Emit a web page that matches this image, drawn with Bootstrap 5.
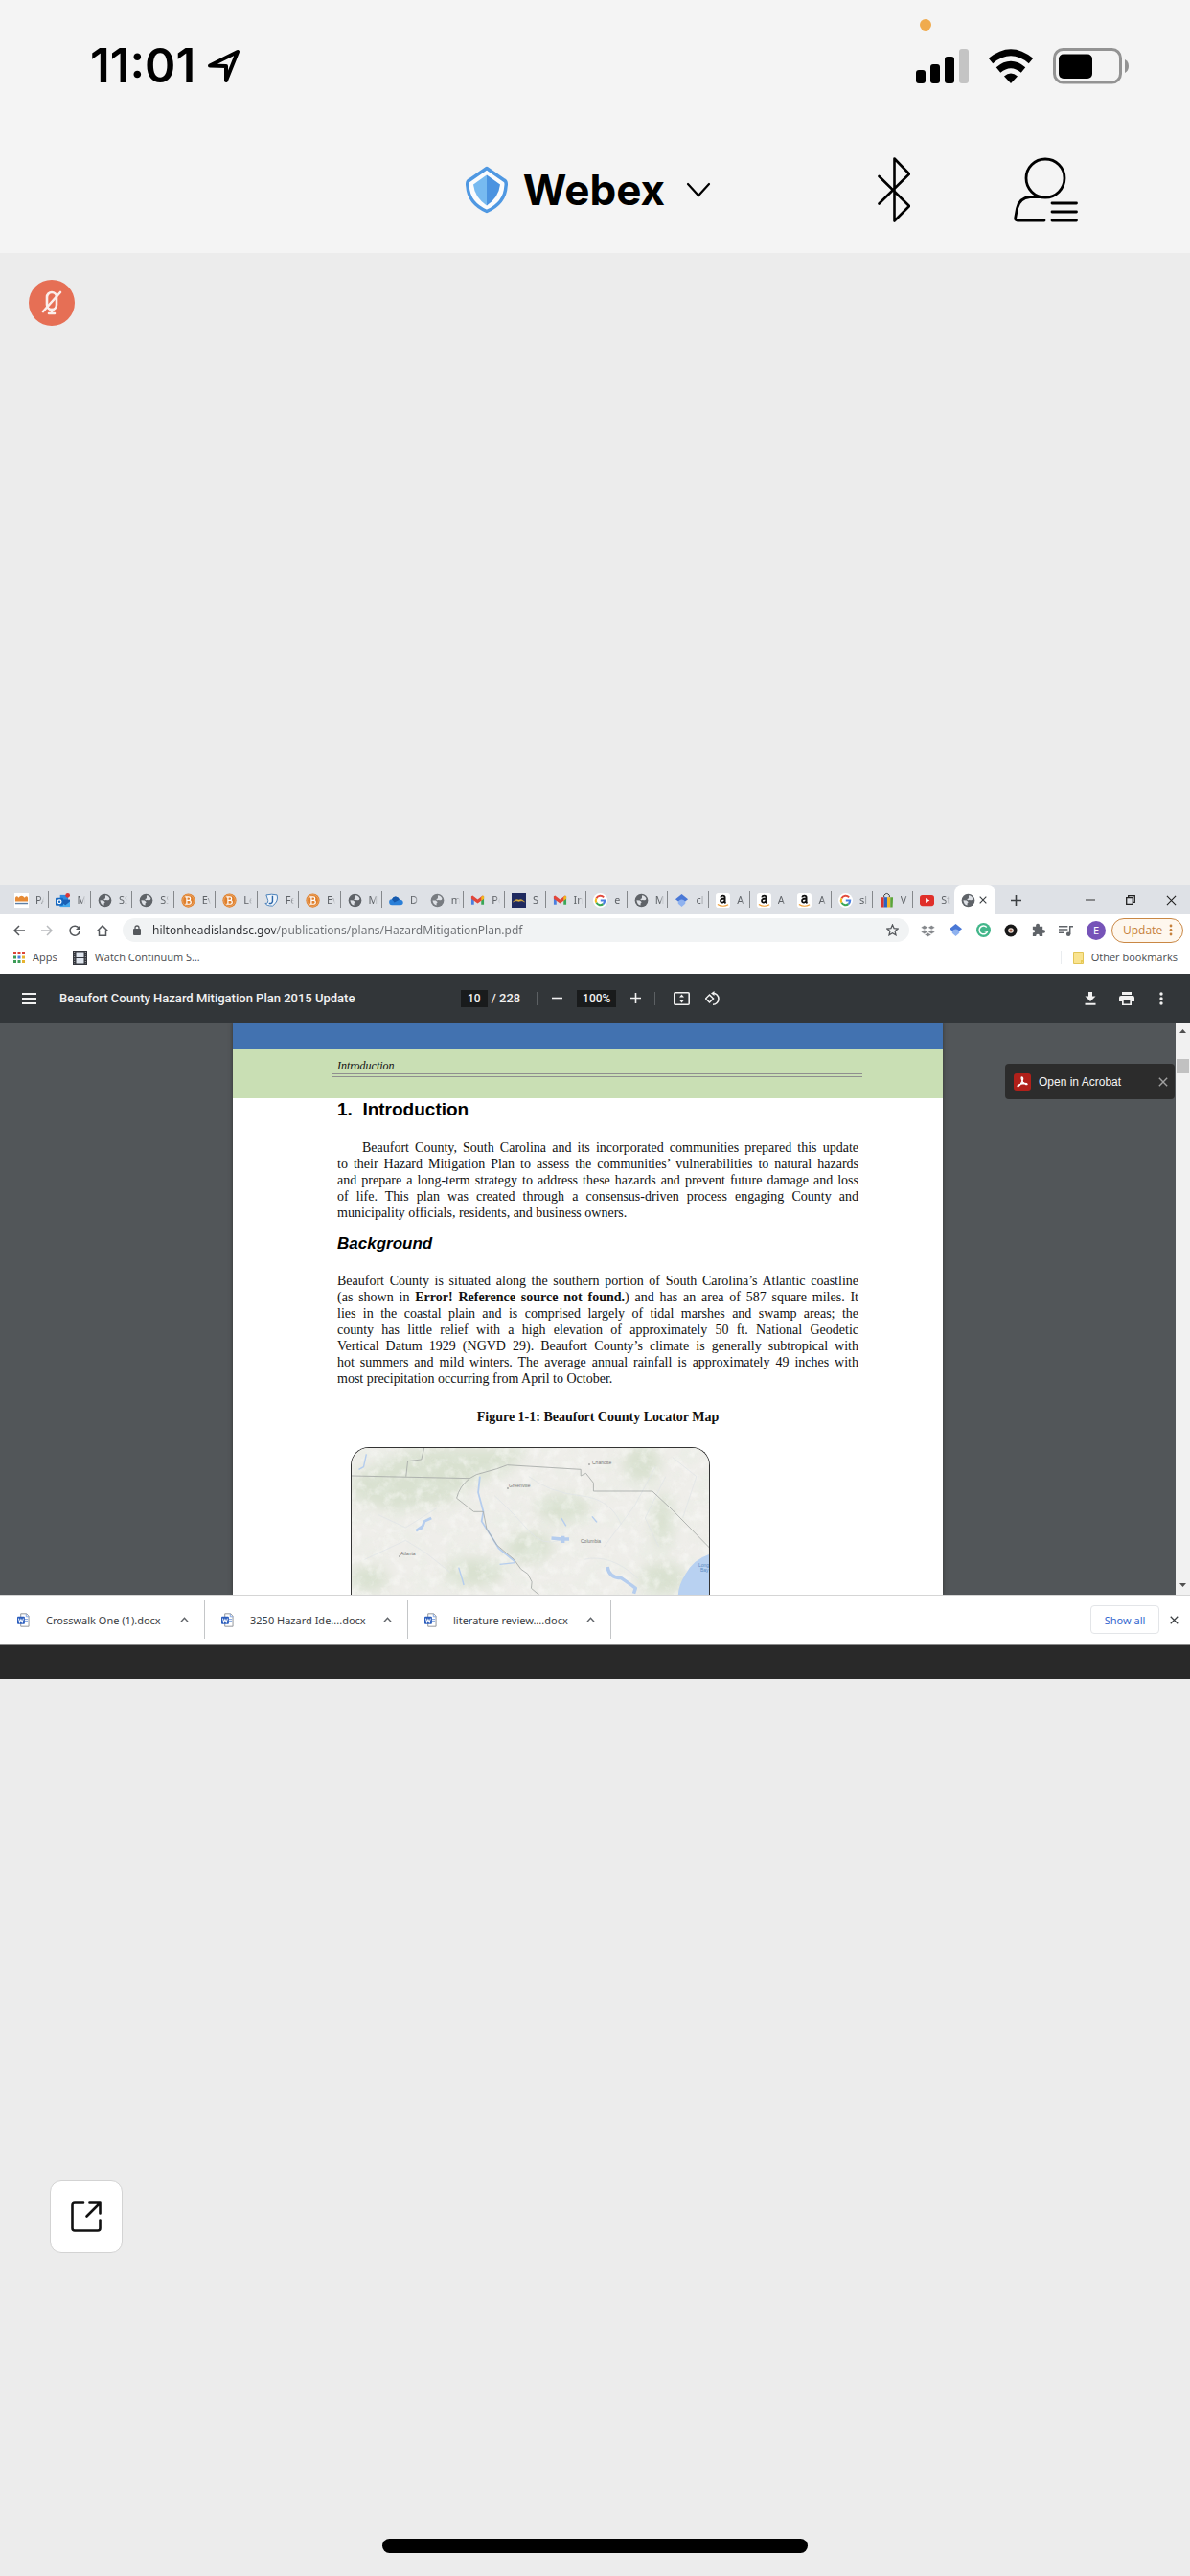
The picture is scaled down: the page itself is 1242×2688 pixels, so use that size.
<!DOCTYPE html>
<html lang="en">
<head>
<meta charset="utf-8">
<meta name="viewport" content="width=device-width, initial-scale=1">
<title>Webex</title>
<link rel="stylesheet" href="https://cdn.jsdelivr.net/npm/bootstrap@5.3.0/dist/css/bootstrap.min.css">
<style>
body{background:#ececec;color:#000;font-family:Inter,sans-serif}
svg{display:block;flex:none}
button{color:inherit;background:none;border:0;padding:0;line-height:1}
.call-head{background:#f4f4f4}
.status-row{height:134px;padding:3px 64px 0 94px}
.clock-set{gap:12px}
.clock{font-size:49px;font-weight:600;line-height:48px}
.status-icons{gap:20px}
.mic-dot{width:12px;height:12px;background:#f0ab4e;right:270px;top:20px}
.title-row{height:130px;display:grid;grid-template-columns:1fr auto 1fr;padding-bottom:2px}
.title-btn{font-size:44px;font-weight:700;line-height:48px;padding-right:14px}
.title-chev{margin-left:22px}
.head-icons{gap:108px;padding-right:117px}
.stage-top{height:660px;padding:28px 30px}
.mute-btn{width:48px;height:48px;background:#e66f55}
.win{font-family:"Noto Sans","Open Sans",sans-serif;font-size:12px;line-height:16px;color:#3c4043}
.tab-strip{height:30px;background:#dee1e6;padding-left:8px}
.tab-set{height:30px}
.tabs-a{width:391px}
.tabs-b{width:597px}
.tab-btn{flex:1 1 0;min-width:0;padding-left:7px;gap:7px;position:relative;font-size:11px;color:#5f6368;text-align:left}
.tab-btn::after{content:"";position:absolute;right:0;top:6px;height:18px;width:1px;background:#85888c}
.tab-txt{width:9px;line-height:16px;white-space:nowrap;-webkit-mask-image:linear-gradient(90deg,#000 50%,transparent);mask-image:linear-gradient(90deg,#000 50%,transparent)}
.tab-btn.no-rule::after{display:none}
.tab-btn.tab-on{flex:none;width:43px;background:#fff;border-radius:8px 8px 0 0;gap:4px;color:#3c4043}
.win-ctl{gap:28px;padding-right:14px}
.tool-row{height:33px;background:#fff;padding:0 7px 0 14px}
.nav-set{gap:17px;color:#5a5d61;padding-right:15px}
.omni{height:25px;background:#f1f3f4;border-radius:13px;padding:0 11px}
.url-box{border:0;outline:0;padding:0;font-size:12px;line-height:20px;height:22px;background:linear-gradient(90deg,#303236 132px,#6d7074 132px);-webkit-background-clip:text;background-clip:text;color:transparent}
.ext-set{gap:14px;padding-left:12px;padding-right:6px}
.avatar{width:20px;height:20px;background:#7654b8;color:#fff;font-size:11px}
.update-btn{height:26px;width:75px;border:1px solid #c98744;background:#fef7ee;color:#c5803c;border-radius:13px;padding:0 10px 0 11px;font-size:12px;font-family:"Open Sans",sans-serif}
.mark-row{height:29px;background:#fff;padding:0 13px 5px 14px;font-size:11px;font-family:"Open Sans",sans-serif}
.mark-row a{color:#4a4d51;text-decoration:none}
.mark-rule{height:14px;margin-right:12px}
.pdf-bar{height:51px;background:#323639;color:#f1f1f1;font-family:Roboto,sans-serif;font-size:13px;font-weight:500;display:grid;grid-template-columns:1fr auto 1fr;padding:0 26px 0 23px}
.pdf-bar .pdf-box{background:#191b1c;border:0;color:#f1f1f1;text-align:center;height:18px;padding:0;font-size:12px;font-weight:500}
.pdf-title{margin-left:24px}
.pdf-mid{padding-right:6px}
.page-in{width:28px}
.zoom-in{width:41px;margin:0 15px}
.bar-rule{width:1px;height:14px;background:#5c6063}
.rule-a{margin:0 15px 0 17px}
.rule-b{margin:0 19px 0 14px}
.pdf-end{gap:24px}
.pdf-view{height:597px;background:#525659;overflow:hidden}
.sheet{width:741px;background:#fff;font-family:"Liberation Serif",serif;color:#111;box-shadow:0 0 4px #333}
.band-blue{height:28px;background:#4272b0}
.band-green{height:51px;background:#c9dfb4;padding:9px 84px 0 103px}
.run-head{font-size:12px;line-height:16px;font-style:italic;padding-left:6px;border-bottom:4px double #8f8f8f}
.sheet-body{padding:0 88px 0 109px}
.sheet h1,.sheet h2{font-family:"Liberation Sans",sans-serif;font-weight:700;margin:0}
.sheet h1{font-size:19px;line-height:24px;padding-bottom:19px;color:#000}
.sheet h2{font-size:17px;line-height:24px;font-style:italic;padding:12px 0 18px;color:#000}
.sheet p{font-size:14px;line-height:17px;margin:0}
.sheet p span{display:block;white-space:nowrap;text-align:justify;text-align-last:justify}
.sheet p span:last-child{text-align-last:left}
.sheet p span.indent{padding-left:26px}
.sheet figcaption{font-size:14px;line-height:18px;font-weight:700;text-align:center;padding:23px 0 22px}
.map-box{width:375px;margin-left:14px;border:1px solid #333;border-bottom:0;border-radius:19px 19px 0 0;overflow:hidden}
.scroll-col{width:15px;background:#f1f1f1;color:#505050;padding:7px 0 8px}
.scroll-thumb{height:15px;background:#c1c1c1;margin:27px 1px 0}
.acro{right:1px;top:43px;width:177px;height:37px;background:#2c2c2c;border-radius:4px;color:#f4f4f4;font-family:"Liberation Sans",sans-serif;font-size:12px;padding:0 7px 0 9px}
.acro-x{color:#a0a0a0}
.dl-row{height:51px;background:#fff;border-top:1px solid #d5d5d5;font-size:11px}
.dl-item{width:212px;height:40px;padding:0 16px 0 17px;border-right:1px solid #c4c6c8}
.dl-item:first-child{width:214px;padding-left:18px}
.dl-name{flex:1;padding-left:17px;text-align:left}
.show-all{width:72px;height:30px;border:1px solid #e3e5e8;border-radius:4px;color:#3569cf;font-size:11px}
.dl-x{margin:0 12px 0 11px}
.dock-strip{height:37px;background:#292929;border-top:1px solid #8b8b8b}
.pop-btn{width:76px;height:76px;border:1px solid #d3d3d3;border-radius:12px;margin:0 52px 298px;background:#fff;color:#111}
.home-bar{width:444px;height:15px;background:#000;margin-bottom:24px}
</style>
</head>
<body>
<svg width="0" height="0" class="position-absolute" aria-hidden="true">
<defs>
<symbol id="globe" viewBox="0 0 16 16"><circle cx="8" cy="8" r="7.300" fill="#5f6368"/><path d="M8.500 2.500q3.500.2 4.800 3.500-.8 2.200-2.800 1.600-1.200-.6-2.500.2-1.500-.2-1-1.500l1.500-.8z M2.600 7.600l3.600.3 2 2-1.200 1.400v2q-3.900-.7-4.400-5.700z" fill="#dee1e6"/></symbol>
<symbol id="bee" viewBox="0 0 16 16"><circle cx="8" cy="8" r="7.600" fill="#df7f2c"/><circle cx="8" cy="8" r="6.200" fill="none" stroke="#f3c08c" stroke-width=".6"/><path d="M4.500 4.200h4a1.800 1.800 0 0 1 0 3.700H6.300h2.600a2 2 0 0 1 0 4.100H4.500M6.300 4v8" fill="none" stroke="#fff" stroke-width="1.300"/></symbol>
<symbol id="gmail" viewBox="0 0 16 16"><path d="M1 3.500v9h3V6z" fill="#4a7fe0"/><path d="M15 3.500v9h-3V6z" fill="#3ba757"/><path d="M1 3.500 2.500 2.600 8 7l5.500-4.400L15 3.500v2.500l-7 5.200L1 6z" fill="#e1463a"/><path d="M12 4.200 14 2.600l1 1V6l-3 2.200z" fill="#f2b91d"/></symbol>
<symbol id="goog" viewBox="0 0 16 16"><circle cx="8" cy="8" r="8" fill="#fff"/><g fill="none" stroke-width="2.200"><path d="M11.900 4.600A5 5 0 0 0 3.700 5.500" stroke="#e24a3d"/><path d="M3.700 5.500a5 5 0 0 0 0 5" stroke="#f3b922"/><path d="M3.700 10.500a5 5 0 0 0 7.500 1.400" stroke="#3ba757"/><path d="M11.200 11.900A5 5 0 0 0 13 8H8.300" stroke="#4a7fe0"/></g></symbol>
<symbol id="amzn" viewBox="0 0 16 16"><rect width="16" height="16" rx="3" fill="#fff"/><path d="M5.600 4.600C6 2.200 10.200 2.100 10.200 4.800V10l1 1M10 5.900C6.500 6 5 7 5.400 8.900 5.900 10.900 9.200 10.600 10 8.200" fill="none" stroke="#111" stroke-width="2"/><path d="M2 12.200q6 3.700 12 .3" fill="none" stroke="#f0a13b" stroke-width="1.300"/></symbol>
<symbol id="scholar" viewBox="0 0 16 16"><path d="M8 1 15 6.600 8 12 1 6.600z" fill="#4a78d6"/><path d="M4 9q4-4 8 0v2.500L8 15l-4-3.500z" fill="#8fb2ef"/></symbol>
<symbol id="worddoc" viewBox="0 0 14 16"><path d="M4 .8h6.500L13 3.500v11.700H4z" fill="#fff" stroke="#8b9096"/><path d="M10 1v3h3M8.500 7H12M8.500 9H12" fill="none" stroke="#7ca0dc"/><rect y="4" width="8.500" height="8.500" rx="1" fill="#2b5dbd"/><path d="m1.600 6 1.200 4.500L4.200 7l1.400 3.500L6.900 6" fill="none" stroke="#fff" stroke-width="1.100"/></symbol>
<symbol id="xmark" viewBox="0 0 12 12"><path d="m1 1 10 10M11 1 1 11" fill="none" stroke="currentColor" stroke-width="1.700"/></symbol>
<symbol id="caret" viewBox="0 0 10 8"><path d="m1 6.500 4-4.500 4 4.500" fill="none" stroke="#5f6368" stroke-width="1.500"/></symbol>
</defs>
</svg>

<div class="d-flex flex-column min-vh-100">
<header class="call-head">
  <div class="status-row d-flex align-items-center justify-content-between position-relative">
    <div class="clock-set d-flex align-items-center">
      <span class="clock">11:01</span>
      <svg width="36" height="36" viewBox="0 0 36 36"><path d="M3 17.500 32 3 20 33v-15z" fill="none" stroke="#000" stroke-width="4" stroke-linejoin="round"/></svg>
    </div>
    <span class="mic-dot position-absolute rounded-circle"></span>
    <div class="status-icons d-flex align-items-center">
      <svg width="55" height="36" viewBox="0 0 55 36"><rect y="22" width="10" height="14" rx="3"/><rect x="15" y="16" width="10" height="20" rx="3"/><rect x="30" y="8" width="10" height="28" rx="3"/><rect x="45" width="10" height="36" rx="3" fill="#c4c4c4"/></svg>
      <svg width="48" height="36" viewBox="0 0 48 36"><g fill="none" stroke="#000" stroke-width="7"><path d="M3 12.500Q24-5 45 12.500"/><path d="M11 22q13-11 26 0"/></g><path d="M24 36l-7-7.500q7-6 14 0z"/></svg>
      <svg width="79" height="38" viewBox="0 0 79 38"><rect x="1.500" y="1.500" width="69" height="34.500" rx="9" fill="none" stroke="#939393" stroke-width="3"/><rect x="6" y="6.500" width="35" height="25.500" rx="5"/><path d="M75 12q4 2 4 7t-4 7z" fill="#939393"/></svg>
    </div>
  </div>
  <div class="title-row align-items-center">
    <span></span>
    <button type="button" class="title-btn d-flex align-items-center">
      <svg class="me-3" width="44" height="50" viewBox="0 0 44 50"><path d="M22 2.500 40 15q3 1 2 6.500Q41 39 22 47.500 3 39 2 21.500 1 16 4 15z" fill="#fbfcfd" stroke="#4f98e2" stroke-width="3.500" stroke-linejoin="round"/><path d="M22 9.500v32Q9.500 33 8 19.500z" fill="#77baf0"/><path d="M22 9.500v32Q34.500 33 36 19.500z" fill="#4b93e0"/></svg>
      <span>Webex</span>
      <svg class="title-chev" width="26" height="16" viewBox="0 0 26 16"><path d="m2 2 11 12L24 2" fill="none" stroke="#000" stroke-width="2.200" stroke-linecap="round"/></svg>
    </button>
    <div class="head-icons d-flex justify-content-end">
      <button type="button" aria-label="Bluetooth audio"><svg width="34" height="68" viewBox="0 0 34 68"><path d="M1.500 20 33 51 17.500 66.500v-65L33 17.500 1.500 48.500" fill="none" stroke="#000" stroke-width="2.600" stroke-linejoin="round" stroke-linecap="round"/></svg></button>
      <button type="button" aria-label="Participants"><svg width="67" height="68" viewBox="0 0 67 68"><g fill="none" stroke="#000" stroke-width="2.800" stroke-linecap="round"><circle cx="33" cy="22" r="20"/><path d="M32 66H4q-2.500 0-2.300-2.500l1.800-10Q6 42.500 17 41.500h15M40 48h25.500M40 57h25.500M40 66h25.500"/></g></svg></button>
    </div>
  </div>
</header>

<main class="flex-grow-1 d-flex flex-column">
  <div class="stage-top">
    <button type="button" class="mute-btn rounded-circle d-flex align-items-center justify-content-center" aria-label="Muted">
      <svg width="22" height="26" viewBox="0 0 22 26"><g fill="none" stroke="#fbeeeb" stroke-width="2.600" stroke-linecap="round"><rect x="6" y="2" width="10" height="18" rx="5"/><path d="M20 2 2 22M11 20v4M8 24h6"/></g></svg>
    </button>
  </div>

  <section class="win">
    <div class="tab-strip d-flex">
      <div class="tab-set tabs-a d-flex">
        <button type="button" class="tab-btn d-flex align-items-center"><svg width="15" height="15" viewBox="0 0 16 16"><path fill="#fff" d="M0 0h16v16H0z"/><path d="M1 9V5q2-3 3.500 0Q8 1 11.500 5q2-3 3.500 0v4z" fill="#e68a35"/><path d="M1 10.500h14V12H1z" fill="#5c7fa5"/></svg><span class="tab-txt">PA</span></button>
        <button type="button" class="tab-btn d-flex align-items-center"><svg width="15" height="15" viewBox="0 0 16 16"><path fill="#2f8be0" d="M5 2h9v6H5z"/><path fill="#1a5fb4" d="M5 7h11v8H5z"/><path d="m5 9 6 4 5-4v6H5z" fill="#45a9ee"/><rect y="5" width="8.500" height="8.500" rx="1" fill="#1668c1"/><circle cx="4.300" cy="9.300" r="2" fill="none" stroke="#fff" stroke-width="1.300"/><circle cx="13.500" cy="2.500" r="2.500" fill="#d93636"/></svg><span class="tab-txt">M</span></button>
        <button type="button" class="tab-btn d-flex align-items-center"><svg width="15" height="15"><use href="#globe"/></svg><span class="tab-txt">SS</span></button>
        <button type="button" class="tab-btn d-flex align-items-center"><svg width="15" height="15"><use href="#globe"/></svg><span class="tab-txt">SS</span></button>
        <button type="button" class="tab-btn d-flex align-items-center"><svg width="15" height="15"><use href="#bee"/></svg><span class="tab-txt">Ev</span></button>
        <button type="button" class="tab-btn d-flex align-items-center"><svg width="15" height="15"><use href="#bee"/></svg><span class="tab-txt">Le</span></button>
        <button type="button" class="tab-btn d-flex align-items-center"><svg width="15" height="15" viewBox="0 0 16 16"><path d="M2 2q6-1.500 12 0 2 7-5 12Q2 14 1 11q3 1 3-3z" fill="#eef4fb" stroke="#447db8"/><path d="M9 3v6q-1 3-4 2" fill="none" stroke="#2b66a8" stroke-width="1.500"/></svg><span class="tab-txt">Fe</span></button>
        <button type="button" class="tab-btn d-flex align-items-center"><svg width="15" height="15"><use href="#bee"/></svg><span class="tab-txt">Ev</span></button>
        <button type="button" class="tab-btn d-flex align-items-center"><svg width="15" height="15"><use href="#globe"/></svg><span class="tab-txt">M</span></button>
      </div>
      <div class="tab-set tabs-b d-flex">
        <button type="button" class="tab-btn d-flex align-items-center"><svg width="15" height="15" viewBox="0 0 16 16"><path d="M3.500 13a3.200 3.200 0 0 1-.3-6.400Q5 3 8.300 4q2.700.5 3.400 3.200 4 .2 4 3.200 0 2.600-3 2.600z" fill="#2a7fd8"/><path d="M3.200 6.600Q5 3 8.300 4q2.700.5 3.400 3.200L6 10z" fill="#1559ac"/></svg><span class="tab-txt">D</span></button>
        <button type="button" class="tab-btn d-flex align-items-center"><svg width="15" height="15" opacity=".8"><use href="#globe"/></svg><span class="tab-txt">m</span></button>
        <button type="button" class="tab-btn d-flex align-items-center"><svg width="15" height="15"><use href="#gmail"/></svg><span class="tab-txt">Pe</span></button>
        <button type="button" class="tab-btn d-flex align-items-center"><svg width="15" height="15" viewBox="0 0 16 16"><path fill="#1f2a60" d="M0 0h16v16H0z"/><path d="M1.500 9.500Q5 5.500 8 7.500q3-2 6.500 2Q11 7.500 8 9 5 7.500 1.500 9.500z" fill="#e3b43c" stroke="#e3b43c" stroke-width=".5"/></svg><span class="tab-txt">S</span></button>
        <button type="button" class="tab-btn d-flex align-items-center"><svg width="15" height="15"><use href="#gmail"/></svg><span class="tab-txt">In</span></button>
        <button type="button" class="tab-btn d-flex align-items-center"><svg width="15" height="15"><use href="#goog"/></svg><span class="tab-txt">e</span></button>
        <button type="button" class="tab-btn d-flex align-items-center"><svg width="15" height="15"><use href="#globe"/></svg><span class="tab-txt">M</span></button>
        <button type="button" class="tab-btn d-flex align-items-center"><svg width="15" height="15"><use href="#scholar"/></svg><span class="tab-txt">cl</span></button>
        <button type="button" class="tab-btn d-flex align-items-center"><svg width="15" height="15"><use href="#amzn"/></svg><span class="tab-txt">A</span></button>
        <button type="button" class="tab-btn d-flex align-items-center"><svg width="15" height="15"><use href="#amzn"/></svg><span class="tab-txt">A</span></button>
        <button type="button" class="tab-btn d-flex align-items-center"><svg width="15" height="15"><use href="#amzn"/></svg><span class="tab-txt">A</span></button>
        <button type="button" class="tab-btn d-flex align-items-center"><svg width="15" height="15"><use href="#goog"/></svg><span class="tab-txt">sl</span></button>
        <button type="button" class="tab-btn d-flex align-items-center"><svg width="15" height="16" viewBox="0 0 16 16"><path d="M5 5V3q3-4 6 0v2" fill="none" stroke="#333"/><path d="M1 5h4v11H2z" fill="#d8372f"/><path d="M5 5h3.500v11H5z" fill="#2c64c0"/><path d="M8.500 5H12v11H8.500z" fill="#efb72b"/><path d="M12 5h3l-.5 11H12z" fill="#5ba53a"/></svg><span class="tab-txt">V</span></button>
        <button type="button" class="tab-btn no-rule d-flex align-items-center"><svg width="15" height="15" viewBox="0 0 16 16"><rect y="2" width="16" height="12" rx="3" fill="#e02f2a"/><path d="M6.500 5.300v5.400L11 8z" fill="#fff"/></svg><span class="tab-txt">St</span></button>
      </div>
      <div class="d-flex flex-grow-1 align-items-center justify-content-between">
        <div class="d-flex align-items-center h-100">
          <button type="button" class="tab-btn tab-on no-rule d-flex align-items-center h-100" aria-label="Active tab"><svg width="15" height="15"><use href="#globe"/></svg><svg width="8" height="8"><use href="#xmark"/></svg></button>
          <button type="button" aria-label="New tab" class="ms-3"><svg width="11" height="11" viewBox="0 0 11 11"><path d="M5.500 0v11M0 5.500h11" stroke="#3c4043" stroke-width="1.600"/></svg></button>
        </div>
        <div class="win-ctl d-flex align-items-center">
          <button type="button" aria-label="Minimize" class="me-1"><svg width="10" height="10" viewBox="0 0 10 10"><path d="M0 5h10" stroke="#333"/></svg></button>
          <button type="button" aria-label="Restore" class="me-1"><svg width="10" height="10" viewBox="0 0 10 10"><path d="M.7 2.700h6.600v6.600H.7zM2.700 2.700v-2h6.600v6.600h-2" fill="none" stroke="#222" stroke-width="1.300"/></svg></button>
          <button type="button" aria-label="Close window"><svg width="11" height="11" viewBox="0 0 12 12"><path d="m1 1 10 10M11 1 1 11" stroke="#222" stroke-width="1.200"/></svg></button>
        </div>
      </div>
    </div>

    <div class="tool-row d-flex align-items-center">
      <div class="nav-set d-flex align-items-center">
        <button type="button" aria-label="Back"><svg width="12" height="12" viewBox="0 0 12 12"><path d="M12 6H1M6 1 1 6l5 5" fill="none" stroke="#55585c" stroke-width="1.500"/></svg></button>
        <button type="button" aria-label="Forward"><svg width="12" height="12" viewBox="0 0 12 12"><path d="M0 6h11M6 1l5 5-5 5" fill="none" stroke="#b9bbbe" stroke-width="1.500"/></svg></button>
        <button type="button" aria-label="Reload"><svg width="12" height="12" viewBox="0 0 12 12"><path d="M10.300 3.500A5 5 0 1 0 11 7" fill="none" stroke="#55585c" stroke-width="1.500"/><path d="M12 0v5H7z" fill="#55585c"/></svg></button>
        <button type="button" aria-label="Home"><svg width="12" height="12" viewBox="0 0 12 12"><path d="M.5 6.500 6 1l5.500 5.500M2.500 5.500v5.800h7V5.500" fill="none" stroke="#55585c" stroke-width="1.500"/></svg></button>
      </div>
      <form class="omni d-flex align-items-center flex-grow-1">
        <svg width="8" height="11" viewBox="0 0 8 11"><rect y="4" width="8" height="7" rx="1" fill="#55585c"/><path d="M2 4.500V3q0-2 2-2t2 2v1.500" fill="none" stroke="#55585c" stroke-width="1.300"/></svg>
        <input class="url-box flex-grow-1 ms-2 me-2 ps-1" type="text" aria-label="Address" value="hiltonheadislandsc.gov/publications/plans/HazardMitigationPlan.pdf">
        <button type="button" aria-label="Bookmark this page"><svg width="13" height="13" viewBox="0 0 13 13"><path d="m6.500 1 1.600 3.700 4 .4-3 2.700.9 4-3.500-2.100L3 11.800l.9-4-3-2.700 4-.4z" fill="none" stroke="#55585c" stroke-width="1.300"/></svg></button>
      </form>
      <div class="ext-set d-flex align-items-center">
        <button type="button" aria-label="Dropbox"><svg width="15" height="14" viewBox="0 0 16 14"><path d="m4 1 4 2.500L4 6 0 3.500zM12 1l4 2.500L12 6 8 3.500zM4 6l4 2.500L4 11 0 8.500zM12 6l4 2.500-4 2.500-4-2.500zM8 9.500l4 2.300L8 14l-4-2.200z" fill="#85888c" stroke="#fff" stroke-width=".6"/></svg></button>
        <button type="button" aria-label="Scholar"><svg width="15" height="15"><use href="#scholar"/></svg></button>
        <button type="button" aria-label="Grammar check"><svg width="15" height="15" viewBox="0 0 16 16"><circle cx="8" cy="8" r="8" fill="#42b68a"/><path d="M11.500 4.800A4.700 4.700 0 1 0 12.500 9.200H9.200" fill="none" stroke="#fff" stroke-width="1.600"/></svg></button>
        <button type="button" aria-label="Recorder"><svg width="14" height="14" viewBox="0 0 14 14"><circle cx="7" cy="7" r="6.500" fill="#181818"/><circle cx="7" cy="7" r="2.800" fill="#efe2dc"/><circle cx="7" cy="7" r="1.600" fill="#a2634c"/></svg></button>
        <button type="button" aria-label="Extensions"><svg width="15" height="15" viewBox="0 0 16 16"><path d="M2 4h3.500Q5 .8 7.500.8T9.500 4H13v3.500q3 0 3 2t-3 2V15H9.500q0-2.500-2-2.500t-2 2.500H2v-3.800q2.500-.2 2.500-1.900T2 7.400z" fill="#5f6368"/></svg></button>
        <button type="button" aria-label="Media"><svg width="15" height="14" viewBox="0 0 16 14"><path d="M0 2.500h10M0 6h10M0 9.500h6M12.500 11V2.500H16" stroke="#5f6368" stroke-width="1.600" fill="none"/><circle cx="10.800" cy="11" r="2.400" fill="#5f6368"/></svg></button>
        <button type="button" class="avatar rounded-circle" aria-label="Profile">E</button>
      </div>
      <button type="button" class="update-btn d-flex align-items-center justify-content-between"><span>Update</span><svg width="4" height="13" viewBox="0 0 4 13"><g fill="#c5803c"><circle cx="2" cy="2" r="1.400"/><circle cx="2" cy="6.500" r="1.400"/><circle cx="2" cy="11" r="1.400"/></g></svg></button>
    </div>

    <div class="mark-row d-flex align-items-center">
      <svg width="12" height="12" viewBox="0 0 12 12"><path fill="#dc4437" d="M0 0h3v3H0zM4.500 0h3v3h-3zM9 0h3v3H9z"/><path fill="#3c9c57" d="M0 4.500h3v3H0zM0 9h3v3H0z"/><path fill="#4a7fe0" d="M4.500 4.500h3v3h-3z"/><path fill="#e7b22f" d="M9 4.500h3v3H9zM9 9h3v3H9z"/><path fill="#3c9c57" d="M4.500 9h3v3h-3z"/></svg>
      <a href="#" class="ms-2">Apps</a>
      <svg class="ms-3" width="15" height="15" viewBox="0 0 15 15"><path fill="#33363d" d="M0 0h15v15H0z"/><path fill="#dfe5ee" d="M3.500 1.500h8v5.500h-8zM3.500 8h8v5.500h-8z"/><path d="M1.700 1v13M13.300 1v13" stroke="#aaa" stroke-dasharray="1 1.500"/></svg>
      <a href="#" class="ms-2">Watch Continuum S...</a>
      <span class="mark-rule ms-auto border-start border-secondary-subtle"></span>
      <svg width="11" height="13" viewBox="0 0 11 13"><path d="M.5.500h10v12H.5z" fill="#f9e38f" stroke="#e2c557"/><path d="M8 13V9h3" fill="#e9cb55"/></svg>
      <a href="#" class="ms-2">Other bookmarks</a>
    </div>

    <div class="pdf-bar align-items-center">
      <div class="d-flex align-items-center">
        <button type="button" aria-label="Menu"><svg width="15" height="12" viewBox="0 0 15 12"><path d="M0 1h15M0 6h15M0 11h15" stroke="#f1f1f1" stroke-width="2"/></svg></button>
        <span class="pdf-title text-nowrap">Beaufort County Hazard Mitigation Plan 2015 Update</span>
      </div>
      <div class="pdf-mid d-flex align-items-center">
        <input class="pdf-box page-in" type="text" value="10" aria-label="Page"><span class="ms-1">/ 228</span>
        <span class="bar-rule rule-a"></span>
        <button type="button" aria-label="Zoom out"><svg width="11" height="11" viewBox="0 0 11 11"><path d="M0 5.500h11" stroke="#f1f1f1" stroke-width="1.600"/></svg></button>
        <input class="pdf-box zoom-in" type="text" value="100%" aria-label="Zoom">
        <button type="button" aria-label="Zoom in"><svg width="11" height="11" viewBox="0 0 11 11"><path d="M0 5.500h11M5.500 0v11" stroke="#f1f1f1" stroke-width="1.600"/></svg></button>
        <span class="bar-rule rule-b"></span>
        <button type="button" aria-label="Fit to page"><svg width="17" height="14" viewBox="0 0 17 14"><rect x=".8" y=".8" width="15.400" height="12.400" rx="1" fill="none" stroke="#f1f1f1" stroke-width="1.600"/><path d="M8.500 2.500 11 5.500H6zM8.500 11.500 11 8.500H6z" fill="#f1f1f1"/></svg></button>
        <button type="button" aria-label="Rotate" class="ms-3"><svg width="16" height="16" viewBox="0 0 16 16"><path d="m4.500 4 4 4-4 4-4-4z" fill="none" stroke="#f1f1f1" stroke-width="1.500"/><path d="M8 2.200a6 6 0 1 1 0 12" fill="none" stroke="#f1f1f1" stroke-width="1.600"/><path d="M9.500 0v5L6 2.400z" fill="#f1f1f1"/></svg></button>
      </div>
      <div class="pdf-end d-flex align-items-center justify-content-end">
        <button type="button" aria-label="Download"><svg width="12" height="14" viewBox="0 0 12 14"><path d="M4 0h4v4.500h3.500L6 10 .5 4.500H4zM.5 11.800h11v2H.5z" fill="#f1f1f1"/></svg></button>
        <button type="button" aria-label="Print"><svg width="16" height="14" viewBox="0 0 16 14"><path d="M3 0h10v3H3zM2 4h12q2 0 2 2v4h-3v4H3v-4H0V6q0-2 2-2z" fill="#f1f1f1"/><path d="M4.700 8.500h6.600v4H4.700z" fill="#323639"/></svg></button>
        <button type="button" aria-label="More"><svg width="8" height="14" viewBox="0 0 8 14"><g fill="#f1f1f1"><circle cx="4" cy="2" r="1.700"/><circle cx="4" cy="7" r="1.700"/><circle cx="4" cy="12" r="1.700"/></g></svg></button>
      </div>
    </div>

    <div class="pdf-view d-flex">
      <div class="flex-grow-1 d-flex justify-content-center position-relative">
        <article class="sheet">
          <div class="band-blue"></div>
          <div class="band-green"><div class="run-head">Introduction</div></div>
          <div class="sheet-body">
            <h1>1.&nbsp; Introduction</h1>
            <p><span class="indent">Beaufort County, South Carolina and its incorporated communities prepared this update</span><span>to their Hazard Mitigation Plan to assess the communities’ vulnerabilities to natural hazards</span><span>and prepare a long-term strategy to address these hazards and prevent future damage and loss</span><span>of life. This plan was created through a consensus-driven process engaging County and</span><span>municipality officials, residents, and business owners.</span></p>
            <h2>Background</h2>
            <p><span>Beaufort County is situated along the southern portion of South Carolina’s Atlantic coastline</span><span>(as shown in <b>Error! Reference source not found.</b>) and has an area of 587 square miles. It</span><span>lies in the coastal plain and is comprised largely of tidal marshes and swamp areas; the</span><span>county has little relief with a high elevation of approximately 50 ft. National Geodetic</span><span>Vertical Datum 1929 (NGVD 29). Beaufort County’s climate is generally subtropical with</span><span>hot summers and mild winters. The average annual rainfall is approximately 49 inches with</span><span>most precipitation occurring from April to October.</span></p>
            <figure class="m-0">
              <figcaption>Figure 1-1: Beaufort County Locator Map</figcaption>
              <div class="map-box">
                <svg width="375" height="155" viewBox="0 0 375 155">
                  <defs>
                    <filter id="soft" x="-30%" y="-30%" width="160%" height="160%"><feGaussianBlur stdDeviation="20"/></filter>
                    <filter id="grain" x="0" y="0" width="100%" height="100%"><feTurbulence type="fractalNoise" baseFrequency=".05 .06" numOctaves="5" seed="8"/><feColorMatrix values="0 0 0 0 .80 0 0 0 0 .85 0 0 0 0 .77 2.200 0 0 0 -.900"/></filter>
                    <filter id="pale" x="0" y="0" width="100%" height="100%"><feTurbulence type="fractalNoise" baseFrequency=".09" numOctaves="4" seed="21"/><feColorMatrix values="0 0 0 0 .96 0 0 0 0 .96 0 0 0 0 .94 0 3 0 0 -1.400"/></filter>
                  </defs>
                  <rect width="375" height="155" fill="#efeeea"/>
                  <g transform="scale(.357 .3333) translate(-382 -211)">
                    <g fill="#d9e1d0" filter="url(#soft)"><path d="M382 300 560 211h340l-60 70-110 40-50 60-170 30-130-40z"/><ellipse cx="1000" cy="400" rx="80" ry="45"/><ellipse cx="1230" cy="260" rx="55" ry="60"/><ellipse cx="900" cy="520" rx="70" ry="50"/><ellipse cx="740" cy="600" rx="90" ry="45"/><ellipse cx="1290" cy="440" rx="30" ry="90"/><ellipse cx="1290" cy="620" rx="70" ry="50"/><ellipse cx="430" cy="620" rx="60" ry="40"/></g>
                  </g>
                  <rect width="375" height="155" filter="url(#grain)" opacity=".5"/>
                  <rect width="375" height="155" filter="url(#pale)" opacity=".5"/>
                  <g transform="scale(.357 .3333) translate(-382 -211)" fill="none">
                    <path d="M1432 542q-50 15-75 65-22 40-20 66h95z" fill="#b8d1f1"/>
                    <g stroke="#dfe3e6" stroke-width="2"><path d="M800 360q60 60 100 110t90 30M900 300q60 50 150 60t120 90M1120 520l90-130 60-120M420 560l120-60 60 40 70 60M1060 560q80-20 160 60M460 420l80 40 90-60M1300 300l-60 130 40 90M1320 240l70 60-40 130"/></g>
                    <g stroke="#b5cdee" stroke-linejoin="round"><path d="M757 300l-5 50 15 60-5 30 30 50 20 35 48 42" stroke-width="5"/><path d="M570 470l20-15 5-15 20-10M590 455l-8 12" stroke-width="8"/><path d="M966 493l30 3 22 0M1000 486v22" stroke-width="10"/><path d="M1130 583q5 35 40 35l30 22 12 10-5 16" stroke-width="10"/><path d="M695 585l10 35 5 20M425 230l-8 40-14 8M860 570l-45 5M995 430l14 25M1085 425l14 18" stroke-width="4"/></g>
                    <g stroke="#a7aaa8" stroke-width="2.500"><path d="M382 298l345 8 20-12 60-18 30-12 215 14 0 20 15-8 22 30v26h172l60 60 108 118M541 300l5-48 40-5 8-36M727 306q-30 25-38 62l50 42h28l10 55 30 50 50 45 20 30 20 15 12 25-2 20 28 25"/></g>
                  </g>
                  <g font-family="Liberation Sans, sans-serif" font-size="5" fill="#777"><circle cx="248" cy="17" r=".8"/><text x="251" y="17">Charlotte</text><circle cx="163" cy="42" r=".8"/><text x="164" y="41">Greenville</text><text x="239" y="99">Columbia</text><circle cx="50" cy="113" r=".8"/><text x="51" y="112">Atlanta</text><g fill="#5c8cc4"><text x="362" y="124">Long</text><text x="364" y="129">Bay</text></g></g>
                </svg>
              </div>
            </figure>
          </div>
        </article>
        <div class="acro position-absolute d-flex align-items-center">
          <svg width="18" height="18" viewBox="0 0 18 18"><rect width="18" height="18" rx="3" fill="#b1201a"/><path d="M8.500 4q2 0 .5 4-1.500 4-4.500 6-1.500-1 2-2.500 4-1.500 7-.8 1.500 1.300-1 .8-3.500-1.500-4-5Q7.700 4 8.500 4z" fill="none" stroke="#fff" stroke-width="1.300"/></svg>
          <a href="#" class="text-reset text-decoration-none ms-2">Open in Acrobat</a>
          <button type="button" class="acro-x ms-auto" aria-label="Dismiss"><svg width="10" height="10"><use href="#xmark"/></svg></button>
        </div>
      </div>
      <div class="scroll-col d-flex flex-column">
        <svg class="mx-auto" width="7" height="4" viewBox="0 0 7 4"><path d="M0 4 3.500 0 7 4z" fill="#505050"/></svg>
        <div class="scroll-thumb"></div>
        <svg class="mx-auto mt-auto" width="7" height="4" viewBox="0 0 7 4"><path d="M0 0 3.500 4 7 0z" fill="#505050"/></svg>
      </div>
    </div>

    <div class="dl-row d-flex align-items-center">
      <button type="button" class="dl-item d-flex align-items-center"><svg width="13" height="15"><use href="#worddoc"/></svg><span class="dl-name">Crosswalk One (1).docx</span><svg width="9" height="8"><use href="#caret"/></svg></button>
      <button type="button" class="dl-item d-flex align-items-center"><svg width="13" height="15"><use href="#worddoc"/></svg><span class="dl-name">3250 Hazard Ide....docx</span><svg width="9" height="8"><use href="#caret"/></svg></button>
      <button type="button" class="dl-item d-flex align-items-center"><svg width="13" height="15"><use href="#worddoc"/></svg><span class="dl-name">literature review....docx</span><svg width="9" height="8"><use href="#caret"/></svg></button>
      <button type="button" class="show-all ms-auto">Show all</button>
      <button type="button" class="dl-x" aria-label="Close downloads"><svg width="9" height="9"><use href="#xmark"/></svg></button>
    </div>
    <div class="dock-strip"></div>
  </section>

  <div class="flex-grow-1 d-flex flex-column justify-content-end">
    <button type="button" class="pop-btn d-flex align-items-center justify-content-center" aria-label="Open full view">
      <svg width="34" height="34" viewBox="0 0 34 34"><g fill="none" stroke="#111" stroke-width="2.600" stroke-linecap="round" stroke-linejoin="round"><path d="M14 2.500H5q-2.500 0-2.500 2.500v24q0 2.500 2.500 2.500h24q2.500 0 2.500-2.500v-8.500M20.500 2.500h11v11M31 3 17.500 16.500"/></g></svg>
    </button>
    <div class="home-bar rounded-pill align-self-center"></div>
  </div>
</main>
</div>
<script src="https://cdn.jsdelivr.net/npm/bootstrap@5.3.0/dist/js/bootstrap.bundle.min.js"></script>
</body>
</html>
